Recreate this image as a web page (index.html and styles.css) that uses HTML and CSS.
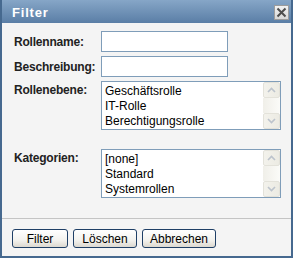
FILE: index.html
```html
<!DOCTYPE html>
<html>
<head>
<meta charset="utf-8">
<link rel="stylesheet" href="styles.css">
</head>
<body>
<div class="dialog">
  <div class="titlebar">
    <span class="title">Filter</span>
    <span class="close">
      <svg width="11" height="11" viewBox="0 0 11 11"><path d="M1.5 1.5 L9.5 9.5 M9.5 1.5 L1.5 9.5" stroke="#4d4d4d" stroke-width="2" fill="none"/></svg>
    </span>
  </div>
  <div class="content">
    <div class="form">
      <label class="lbl mid">Rollenname:</label>
      <input class="field" type="text">
      <label class="lbl mid">Beschreibung:</label>
      <input class="field" type="text">
      <label class="lbl top">Rollenebene:</label>
      <div class="list">
        <div class="items">
          <div class="item">Geschäftsrolle</div>
          <div class="item">IT-Rolle</div>
          <div class="item">Berechtigungsrolle</div>
        </div>
        <div class="sbar">
          <div class="sbtn"><svg width="9" height="6" viewBox="0 0 9 6"><path d="M1 5 L4.5 1.5 L8 5" stroke="#bcc3cc" stroke-width="1.6" fill="none"/></svg></div>
          <div class="strack"></div>
          <div class="sbtn"><svg width="9" height="6" viewBox="0 0 9 6"><path d="M1 1 L4.5 4.5 L8 1" stroke="#bcc3cc" stroke-width="1.6" fill="none"/></svg></div>
        </div>
      </div>
      <label class="lbl top gapped">Kategorien:</label>
      <div class="list gapped">
        <div class="items">
          <div class="item">[none]</div>
          <div class="item">Standard</div>
          <div class="item">Systemrollen</div>
        </div>
        <div class="sbar">
          <div class="sbtn"><svg width="9" height="6" viewBox="0 0 9 6"><path d="M1 5 L4.5 1.5 L8 5" stroke="#bcc3cc" stroke-width="1.6" fill="none"/></svg></div>
          <div class="strack"></div>
          <div class="sbtn"><svg width="9" height="6" viewBox="0 0 9 6"><path d="M1 1 L4.5 4.5 L8 1" stroke="#bcc3cc" stroke-width="1.6" fill="none"/></svg></div>
        </div>
      </div>
    </div>
  </div>
  <div class="footer">
    <button class="btn w-filter">Filter</button>
    <button class="btn w-loeschen">Löschen</button>
    <button class="btn w-abbrechen">Abbrechen</button>
  </div>
</div>
</body>
</html>
```

FILE: styles.css
```css
html, body {
  margin: 0;
  padding: 0;
  background: #ffffff;
}
body {
  font-family: "Liberation Sans", Arial, sans-serif;
  font-size: 12px;
  color: #000;
}
.dialog {
  width: 293px;
  height: 258px;
  box-sizing: border-box;
  border: 2px solid #46698f;
  border-top: 0;
  background: #f4f4f4;
  display: flex;
  flex-direction: column;
}
.titlebar {
  height: 23px;
  box-sizing: border-box;
  background: linear-gradient(#86a6c7, #5a7ea6);
  display: flex;
  align-items: center;
  justify-content: space-between;
  padding: 0 2px 0 10px;
}
.title {
  color: #fff;
  font-weight: bold;
  font-size: 13px;
  letter-spacing: 0.8px;
  line-height: 15px;
  margin-top: 1px;
}
.close {
  width: 15px;
  height: 15px;
  box-sizing: border-box;
  border: 1px solid #9c9c9c;
  background: linear-gradient(#f2f2f2, #d8d8d8);
  display: flex;
  align-items: center;
  justify-content: center;
  margin-top: 1px;
}
.close svg { display: block; }
.content {
  flex: 1;
  padding: 8px 0 0 12px;
}
.form {
  display: grid;
  grid-template-columns: 87px auto;
  row-gap: 4px;
  justify-content: start;
}
.lbl {
  font-weight: bold;
  font-size: 12px;
  letter-spacing: -0.2px;
  color: #222;
  line-height: 14px;
}
.lbl.mid { align-self: center; }
.lbl.top { align-self: start; padding-top: 2px; }
.gapped { margin-top: 15px; }
.field {
  width: 127px;
  height: 21px;
  box-sizing: border-box;
  border: 1px solid #7f9db9;
  background: #fff;
  margin: 0;
  padding: 0;
  outline: none;
}
.list {
  width: 180px;
  height: 49px;
  box-sizing: border-box;
  border: 1px solid #7f9db9;
  background: #fff;
  display: flex;
}
.items {
  flex: 1;
  padding: 2px 0 0 3px;
  font-size: 12px;
  line-height: 15px;
  color: #000;
}
.item { white-space: nowrap; }
.sbar {
  width: 17px;
  display: flex;
  flex-direction: column;
}
.sbtn {
  height: 16px;
  box-sizing: border-box;
  border: 1px solid #e3e2da;
  border-radius: 2px;
  background: linear-gradient(90deg, #f3f2ec, #ecebe3);
  display: flex;
  align-items: center;
  justify-content: center;
}
.sbtn svg { display: block; }
.strack {
  flex: 1;
  background: linear-gradient(90deg, #f0efe9, #fbfbf8);
}
.footer {
  height: 38px;
  box-sizing: border-box;
  border-top: 1px solid #c4c4c4;
  display: flex;
  gap: 5px;
  padding: 10px 0 0 10px;
  align-items: flex-start;
}
.btn {
  height: 19px;
  box-sizing: border-box;
  border: 1px solid #1f3f66;
  border-radius: 3px;
  background: linear-gradient(#ffffff, #f3f2ee 60%, #dcd8cf);
  font-family: "Liberation Sans", Arial, sans-serif;
  font-size: 12px;
  color: #000;
  padding: 0;
  margin: 0;
  line-height: 16px;
}
.w-filter { width: 56px; }
.w-loeschen { width: 64px; }
.w-abbrechen { width: 74px; }
```
